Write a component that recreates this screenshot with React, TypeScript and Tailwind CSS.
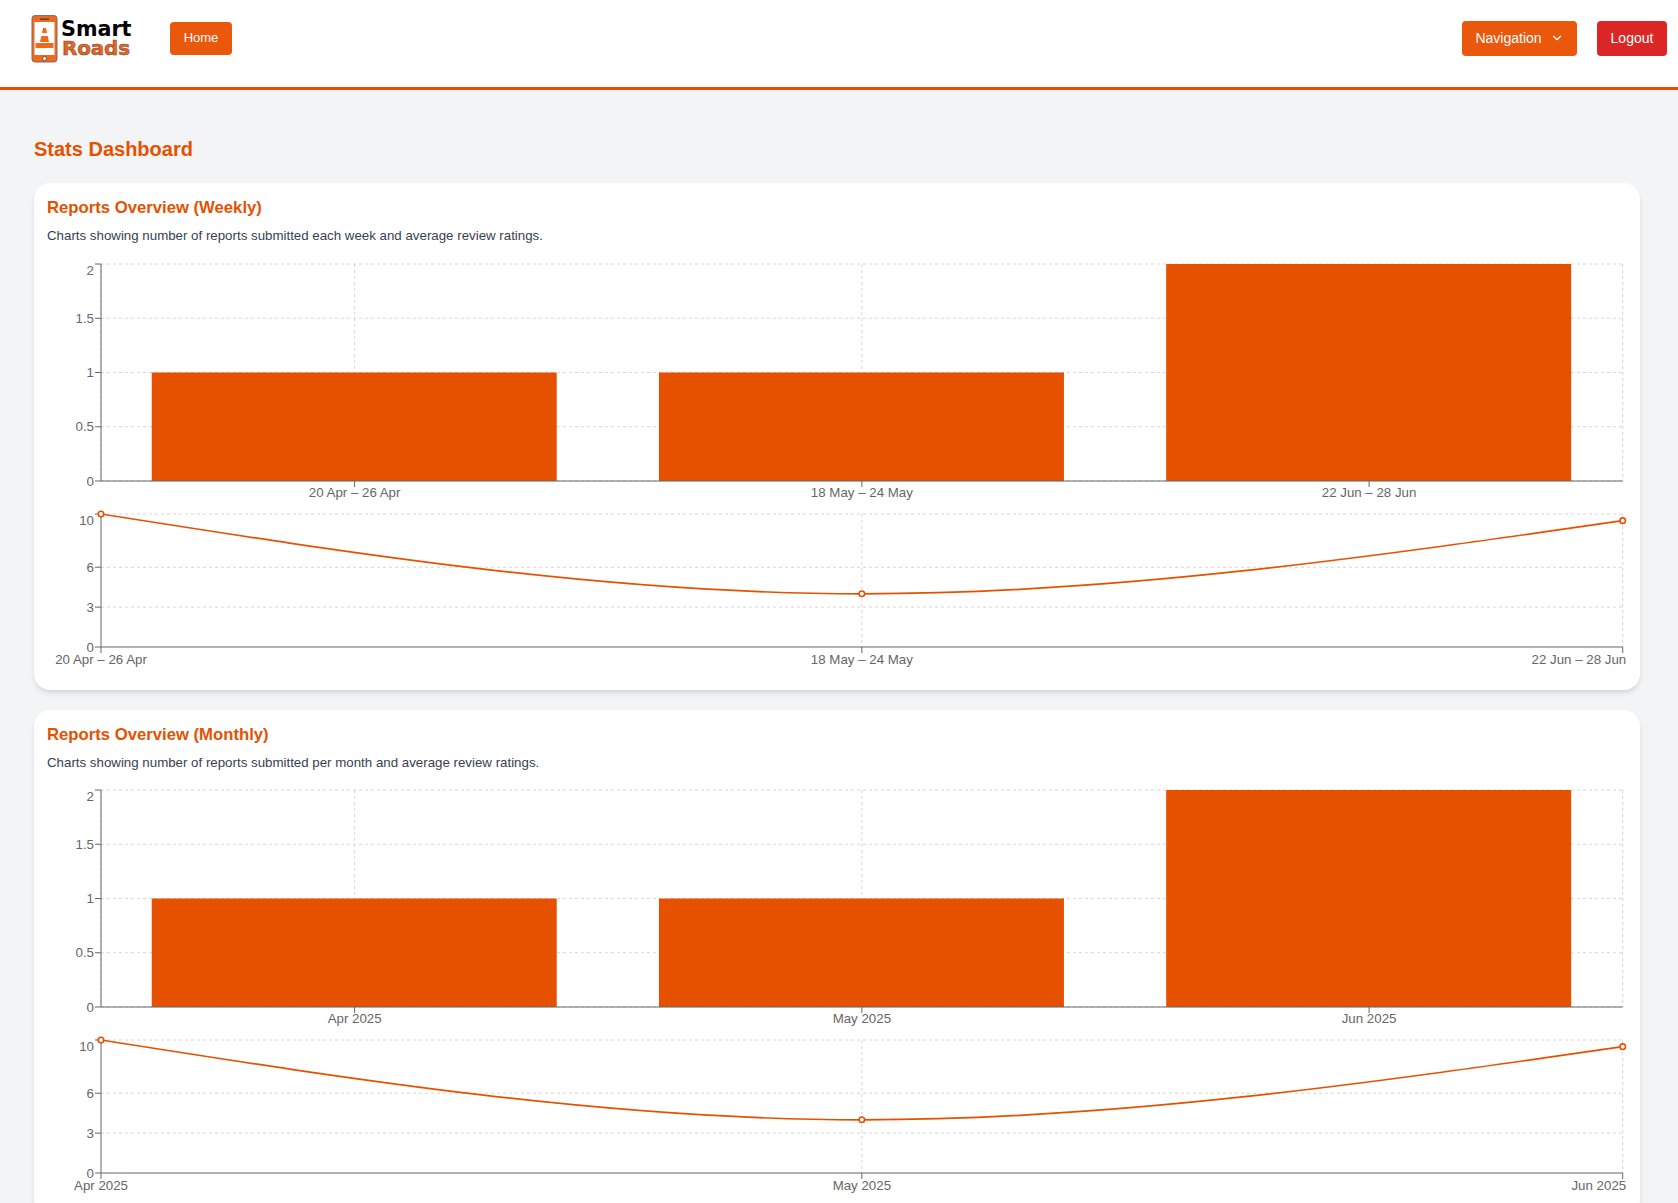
import React from "react";

const ORANGE = "#e65100";
const L = 101;
const R = 1622.7;
const W = 1606;
const OX = 34; // svg left in page = card left
const AXIS_FONT = 13.3;

function Axis({ x1, y1, x2, y2 }: { x1: number; y1: number; x2: number; y2: number }) {
  return <line x1={x1} y1={y1} x2={x2} y2={y2} stroke="#666" strokeWidth={1} />;
}

function Grid({ x1, y1, x2, y2 }: { x1: number; y1: number; x2: number; y2: number }) {
  return <line x1={x1} y1={y1} x2={x2} y2={y2} stroke="#d6d6d6" strokeWidth={1} strokeDasharray="3 3" />;
}

function YTicks({ ticks }: { ticks: { y: number; label: string; ty?: number }[] }) {
  return (
    <>
      {ticks.map((t) => (
        <g key={t.label}>
          <line x1={L - 6 - OX} x2={L - OX} y1={t.y} y2={t.y} stroke="#666" />
          <text x={L - 7 - OX} y={(t.ty ?? t.y) + 4.7} textAnchor="end" fontSize={AXIS_FONT} fill="#666">
            {t.label}
          </text>
        </g>
      ))}
    </>
  );
}

function BarPanel({ labels }: { labels: string[] }) {
  const top = 5;
  const bottom = 222;
  const l = L - OX;
  const r = R - OX;
  const band = (r - l) / 3;
  const centers = [0, 1, 2].map((i) => l + band * (i + 0.5));
  const ys = [0, 1, 2, 3, 4].map((i) => top + ((bottom - top) * i) / 4);
  const heights = [1, 1, 2];
  return (
    <svg width={W} height={250} className="block" style={{ fontFamily: "'Liberation Sans', sans-serif" }}>
      {ys.map((y) => (
        <Grid key={y} x1={l} x2={r} y1={y} y2={y} />
      ))}
      {centers.map((c) => (
        <Grid key={c} x1={c} x2={c} y1={top} y2={bottom} />
      ))}
      <Grid x1={l} x2={l} y1={top} y2={bottom} />
      <Grid x1={r} x2={r} y1={top} y2={bottom} />
      {centers.map((c, i) => {
        const h = ((bottom - top) / 2) * heights[i];
        return <rect key={c} x={c - band * 0.4} y={bottom - h} width={band * 0.8 - 0.8} height={h} fill={ORANGE} />;
      })}
      <Axis x1={l} x2={l} y1={top} y2={bottom} />
      <Axis x1={l} x2={r} y1={bottom} y2={bottom} />
      <YTicks
        ticks={[
          { y: top, label: "2", ty: top + 6 },
          { y: ys[1], label: "1.5" },
          { y: ys[2], label: "1" },
          { y: ys[3], label: "0.5" },
          { y: bottom, label: "0" },
        ]}
      />
      {centers.map((c, i) => (
        <g key={labels[i]}>
          <line x1={c} x2={c} y1={bottom} y2={bottom + 6} stroke="#666" />
          <text x={c} y={bottom + 15.7} textAnchor="middle" fontSize={AXIS_FONT} fill="#666">
            {labels[i]}
          </text>
        </g>
      ))}
    </svg>
  );
}

function LinePanel({ labels }: { labels: string[] }) {
  const top = 5;
  const bottom = 138;
  const l = L - OX;
  const r = R - OX;
  const m = (l + r) / 2;
  const yOf = (v: number) => bottom - ((bottom - top) * v) / 10;
  const xs = [l, m, r];
  const pts = [10, 4, 9.5].map(yOf);
  const h = (r - l) / 2;
  const s0 = (pts[1] - pts[0]) / h;
  const s1 = (pts[2] - pts[1]) / h;
  const d = `M${l},${pts[0]}C${l + h / 3},${pts[0] + (h / 3) * 1.5 * s0},${m - h / 3},${pts[1]},${m},${pts[1]}C${m + h / 3},${pts[1]},${r - h / 3},${pts[2] - (h / 3) * 1.5 * s1},${r},${pts[2]}`;
  return (
    <svg width={W} height={168} className="block" style={{ fontFamily: "'Liberation Sans', sans-serif" }}>
      {[10, 6, 3].map((v) => (
        <Grid key={v} x1={l} x2={r} y1={yOf(v)} y2={yOf(v)} />
      ))}
      <Grid x1={m} x2={m} y1={top} y2={bottom} />
      <Grid x1={r} x2={r} y1={top} y2={bottom} />
      <Axis x1={l} x2={l} y1={top} y2={bottom} />
      <Axis x1={l} x2={r} y1={bottom} y2={bottom} />
      <YTicks
        ticks={[
          { y: yOf(10), label: "10", ty: yOf(10) + 6 },
          { y: yOf(6), label: "6" },
          { y: yOf(3), label: "3" },
          { y: yOf(0), label: "0" },
        ]}
      />
      {xs.map((x, i) => (
        <g key={labels[i]}>
          <line x1={x} x2={x} y1={bottom} y2={bottom + 6} stroke="#666" />
          <text
            x={i === 2 ? r + 3.5 : x}
            y={bottom + 16.7}
            textAnchor={i === 2 ? "end" : "middle"}
            fontSize={AXIS_FONT}
            fill="#666"
          >
            {labels[i]}
          </text>
        </g>
      ))}
      <path d={d} fill="none" stroke={ORANGE} strokeWidth={1.7} />
      {xs.map((x, i) => (
        <circle key={x} cx={x} cy={pts[i]} r={2.75} fill="#fff" stroke={ORANGE} strokeWidth={1.6} />
      ))}
    </svg>
  );
}

function Card({
  title,
  text,
  labels,
  subClass,
}: {
  title: string;
  text: string;
  labels: string[];
  subClass: string;
}) {
  return (
    <section className="bg-white rounded-2xl shadow-md pt-[13px] pb-[13px] mb-5">
      <h2 className="pl-[13px] text-[16.7px] font-bold text-[#e65100] leading-6 mb-[6px]">{title}</h2>
      <p className={`pl-[13px] text-[13.3px] text-[#374151] leading-[19px] ${subClass}`}>{text}</p>
      <BarPanel labels={labels} />
      <LinePanel labels={labels} />
    </section>
  );
}

function Logo() {
  return (
    <div className="flex items-start w-[110px]">
      <svg width="27" height="48" viewBox="0 0 27 48" className="shrink-0">
        <rect x="1" y="0.6" width="25" height="46.4" rx="3" fill="#ee6a1f" stroke="#7d6a60" strokeWidth="1" />
        <rect x="3.5" y="7" width="20" height="33" fill="#fff" />
        <rect x="9" y="3.4" width="9" height="1.4" fill="#5b3a28" />
        <circle cx="13.5" cy="43.5" r="2" fill="#fff" stroke="#5b3a28" strokeWidth="0.8" />
        <path d="M12 13 H15 L16 18 H11 Z" fill="#ee6a1f" />
        <path d="M10.3 21 H16.7 L18 27 H9 Z" fill="#ee6a1f" />
        <rect x="4.5" y="28" width="18" height="5" fill="#ee6a1f" />
      </svg>
      <div className="ml-[3px] mt-[4px] font-['DejaVu_Sans',sans-serif] font-bold leading-[20px]">
        <div className="text-black text-[20.7px]">Smart</div>
        <div className="text-[#e8641f] text-[20px] ml-[1px] mt-[-1px] [-webkit-text-stroke:0.5px_#6b4a36] tracking-[-0.2px]">Roads</div>
      </div>
    </div>
  );
}

const btn = "inline-flex items-center justify-center rounded text-white text-sm";

export default function App() {
  return (
    <div className="min-h-screen bg-[#f3f4f6] font-['Liberation_Sans',Arial,sans-serif]">
      <header className="h-[90px] bg-white border-b-[3px] border-[#e65100] flex items-start justify-between pl-[31px] pr-[11px]">
        <div className="flex items-start pt-[15px]">
          <Logo />
          <button className={`${btn} bg-[#ea580c] w-[62px] h-[33px] mt-[7px] ml-[29px] text-[13px] font-medium`}>Home</button>
        </div>
        <div className="flex items-start pt-[21px] gap-5">
          <button className={`${btn} bg-[#ea580c] w-[115px] h-[35px] gap-[8px] pb-[2px]`}>
            Navigation
            <svg width="14" height="14" viewBox="0 0 24 24" fill="none" stroke="currentColor" strokeWidth="2" strokeLinecap="round" strokeLinejoin="round">
              <path d="m6 9 6 6 6-6" />
            </svg>
          </button>
          <button className={`${btn} bg-[#dc2626] w-[70px] h-[35px] pb-[2px]`}>Logout</button>
        </div>
      </header>
      <main className="pl-[34px] pr-[38px] pt-[45px]">
        <h1 className="text-xl font-bold text-[#e65100] leading-7 mb-[20px]">Stats Dashboard</h1>
        <Card
          title="Reports Overview (Weekly)"
          text="Charts showing number of reports submitted each week and average review ratings."
          labels={["20 Apr – 26 Apr", "18 May – 24 May", "22 Jun – 28 Jun"]}
          subClass="mb-[14px]"
        />
        <Card
          title="Reports Overview (Monthly)"
          text="Charts showing number of reports submitted per month and average review ratings."
          labels={["Apr 2025", "May 2025", "Jun 2025"]}
          subClass="mb-[13px]"
        />
      </main>
    </div>
  );
}
